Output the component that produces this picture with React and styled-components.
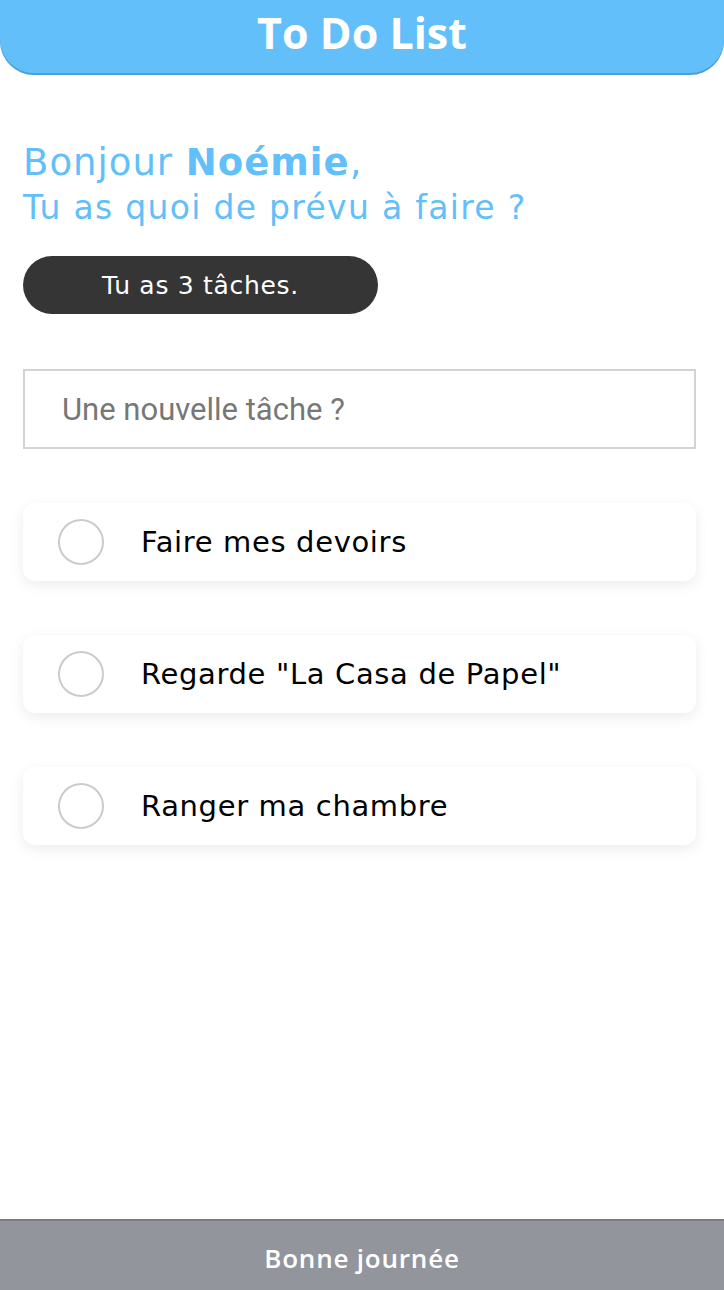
import React from "react";
import styled, { createGlobalStyle } from "styled-components";

const Global = createGlobalStyle`
  html, body { margin: 0; padding: 0; background: #fff; }
  body { font-family: "DejaVu Sans", sans-serif; }
  * { box-sizing: border-box; }
`;

const Page = styled.div`
  min-height: 100vh;
  display: flex;
  flex-direction: column;
`;

const Header = styled.header`
  height: 73px;
  background: #63bff9;
  border-radius: 0 0 34px 34px;
  box-shadow: 0 2px 0 #4b9fd6;
  display: flex;
  justify-content: center;
  align-items: center;
`;

const Title = styled.h1`
  margin: 0;
  color: #fff;
  font-family: "Open Sans", sans-serif;
  font-weight: 700;
  font-size: 43px;
  line-height: 1;
  padding-bottom: 8px;
`;

const Main = styled.main`
  flex: 1;
  padding: 67px 28px 40px 23px;
  display: flex;
  flex-direction: column;
`;

const Greeting = styled.h2`
  margin: 0;
  color: #62bffa;
  font-weight: 400;
  font-family: "DejaVu Sans", sans-serif;
`;

const Line = styled.span`
  display: block;
  white-space: nowrap;
  font-size: ${(p) => p.$size}px;
  line-height: ${(p) => p.$lh}px;
  letter-spacing: ${(p) => p.$ls || 0}px;
`;

const Name = styled.strong`
  font-weight: 700;
`;

const Counter = styled.div`
  margin-top: 26px;
  width: 355px;
  height: 58px;
  border-radius: 29px;
  background: #353535;
  color: #fff;
  font-size: 25px;
  letter-spacing: 0.7px;
  display: flex;
  align-items: center;
  justify-content: center;
`;

const Input = styled.input`
  margin-top: 55px;
  width: 100%;
  height: 80px;
  border: 2px solid #d3d3d3;
  padding: 0 0 0 37px;
  font-family: Roboto, sans-serif;
  font-size: 31px;
  color: #333;
  outline: none;
  &::placeholder { color: #777; }
`;

const List = styled.ul`
  list-style: none;
  margin: 54px 0 0;
  padding: 0;
  display: flex;
  flex-direction: column;
  gap: 54px;
`;

const Card = styled.li`
  height: 78px;
  background: #fff;
  border-radius: 12px;
  box-shadow: 0 4px 14px rgba(0, 0, 0, 0.08);
  display: flex;
  align-items: center;
  padding-left: 35px;
`;

const Check = styled.span`
  width: 46px;
  height: 46px;
  border-radius: 50%;
  border: 2px solid #cbcbcb;
  flex-shrink: 0;
`;

const Label = styled.span`
  margin-left: 37px;
  font-size: 29px;
  letter-spacing: 0.65px;
  color: #000;
  white-space: nowrap;
`;

const Footer = styled.footer`
  height: 71px;
  background: #93959d;
  border-top: 2px solid #7a7b80;
  display: flex;
  align-items: center;
  justify-content: center;
  color: #fff;
  font-family: "Open Sans", sans-serif;
  font-weight: 600;
  font-size: 26px;
  letter-spacing: 0.8px;
  padding-top: 4px;
`;

const tasks = ["Faire mes devoirs", 'Regarde "La Casa de Papel"', "Ranger ma chambre"];

export default function App() {
  return (
    <Page>
      <Global />
      <Header>
        <Title>To Do List</Title>
      </Header>
      <Main>
        <Greeting>
          <Line $size={37} $lh={46} $ls={1}>
            Bonjour <Name>Noémie</Name>,
          </Line>
          <Line $size={33} $lh={44} $ls={1.3}>Tu as quoi de prévu à faire ?</Line>
        </Greeting>
        <Counter>Tu as 3 tâches.</Counter>
        <Input placeholder="Une nouvelle tâche ?" />
        <List>
          {tasks.map((t) => (
            <Card key={t}>
              <Check />
              <Label>{t}</Label>
            </Card>
          ))}
        </List>
      </Main>
      <Footer>Bonne journée</Footer>
    </Page>
  );
}
